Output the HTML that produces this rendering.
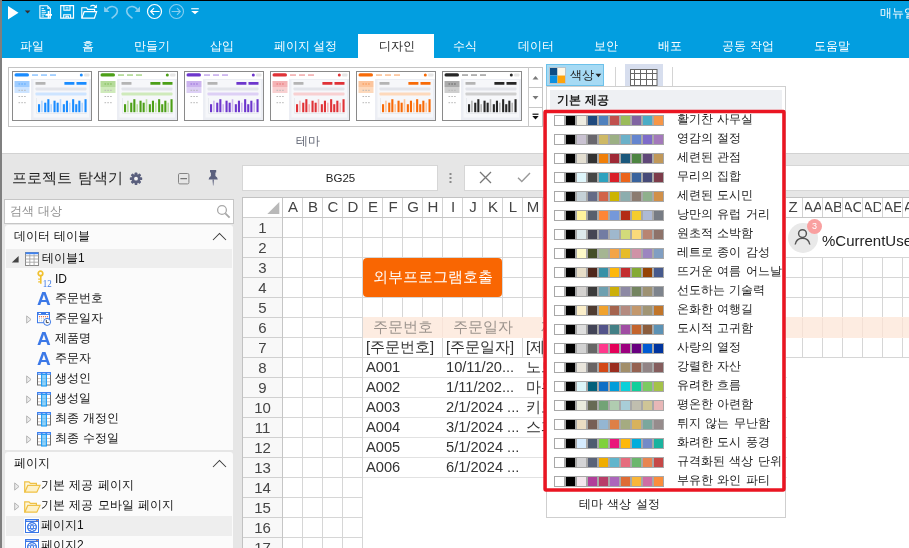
<!DOCTYPE html>
<html lang="ko"><head><meta charset="utf-8"><title>Designer</title>
<style>
*{box-sizing:border-box;margin:0;padding:0}
html,body{width:909px;height:548px;overflow:hidden;background:#e6e6e6}
body{position:relative;font-family:"Liberation Sans",sans-serif;font-size:12px;color:#222;line-height:1}
#app{position:absolute;left:0;top:0;width:909px;height:548px;overflow:hidden;will-change:transform}
.abs{position:absolute}
.t{position:absolute;white-space:nowrap;line-height:1}
#top{left:0;top:0;width:909px;height:58px;background:#029ee0}
#blk{left:0;top:0;width:909px;height:1px;background:#000}
#lb{left:0;top:0;width:2px;height:548px;background:#7f7f7f}
.tab{position:absolute;top:39px;font-size:12px;color:#fff;white-space:nowrap;transform:translateX(-50%);line-height:14px}
#acttab{left:358px;top:34px;width:76px;height:25px;background:#fff}
#ribbon{left:2px;top:58px;width:907px;height:96px;background:#fff;border-bottom:1px solid #d2d2d2}
#gal{left:8px;top:67px;width:535px;height:60px;border:1px solid #c4c4c4;background:#fff}
.th{position:absolute;top:71px;width:80px;height:50px}

#sheet{left:242px;top:197px;width:667px;height:351px;background:#fff;border-left:1px solid #c2c2c2;border-top:1px solid #c2c2c2;overflow:hidden}
.gl{position:absolute;background-image:linear-gradient(to right,#d6d6d6 1px,transparent 1px),linear-gradient(to bottom,#d6d6d6 1px,transparent 1px);background-size:20px 20px}
.ch{position:absolute;top:197px;width:20px;height:19px;clip-path:inset(0 2px);display:flex;justify-content:center;align-items:center;overflow:hidden;font-size:15px;color:#444;white-space:nowrap}
.rh{position:absolute;left:243px;width:39px;height:20px;text-align:center;font-size:15px;line-height:19px;color:#444}
.cell{position:absolute;font-size:14.67px;line-height:20px;height:20px;white-space:nowrap;overflow:hidden;color:#333}

.sw{position:absolute;left:554px;height:11px;display:flex}
.sw i{display:block;width:11px;height:11px;border:1px solid #a8a8a8}
.sl{position:absolute;left:677px;font-size:12px;line-height:14px;color:#222;white-space:nowrap;word-spacing:1px}
</style></head>
<body>
<div id="app">
<div class="abs" id="top"></div>
<div class="abs" id="ribbon"></div>
<div class="abs" id="acttab"></div>
<div class="tab" style="left:32.0px">파일</div>
<div class="tab" style="left:88.3px">홈</div>
<div class="tab" style="left:151.6px">만들기</div>
<div class="tab" style="left:221.8px">삽입</div>
<div class="tab" style="left:305.3px">페이지 설정</div>
<div class="tab" style="left:396.5px;color:#222">디자인</div>
<div class="tab" style="left:465.4px">수식</div>
<div class="tab" style="left:536.2px">데이터</div>
<div class="tab" style="left:605.8px">보안</div>
<div class="tab" style="left:670.0px">배포</div>
<div class="tab" style="left:748.0px">공동 작업</div>
<div class="tab" style="left:831.8px">도움말</div>
<div class="t" style="left:880px;top:7px;font-size:12px;color:#fff">매뉴얼</div>
<div class="abs" id="gal"></div>
<svg width="0" height="0" style="position:absolute"><defs><symbol id="thm" viewBox="0 0 80 50"><rect x="0.5" y="0.5" width="79" height="49" fill="#fff" stroke="#8a8a8a"/><rect x="19" y="8" width="60" height="41" fill="#eceef4"/><rect x="21.5" y="9" width="55.5" height="37.5" fill="#f6f7fa"/><rect x="2.5" y="2.3" width="14.5" height="3.2" rx="1.6" fill="var(--c1)"/><rect x="20" y="3.4" width="6" height="1.3" fill="var(--c2)"/><rect x="29" y="3.4" width="6" height="1.3" fill="var(--c2)"/><rect x="38" y="3.4" width="6" height="1.3" fill="var(--c2)"/><circle cx="69.3" cy="4" r="1.5" fill="var(--c1)"/><rect x="72" y="2.5" width="5.5" height="3" rx="1" fill="#e6e6e6"/><rect x="2.5" y="10" width="15" height="6" fill="var(--c2)" opacity=".75"/><rect x="2.5" y="16" width="15" height="6" fill="var(--c3)"/><g fill="var(--c1)" opacity=".55"><rect x="6.5" y="12.5" width="1.6" height="1"/><rect x="9.3" y="12.5" width="1.6" height="1"/><rect x="12.1" y="12.5" width="1.6" height="1"/></g><g fill="#b8b8b8"><rect x="6.5" y="18.8" width="1.6" height="1"/><rect x="9.3" y="18.8" width="1.6" height="1"/><rect x="12.1" y="18.8" width="1.6" height="1"/><rect x="6.5" y="25" width="1.6" height="1"/><rect x="9.3" y="25" width="1.6" height="1"/><rect x="12.1" y="25" width="1.6" height="1"/><rect x="6.5" y="31.2" width="1.6" height="1"/><rect x="9.3" y="31.2" width="1.6" height="1"/><rect x="12.1" y="31.2" width="1.6" height="1"/></g><rect x="23.5" y="11" width="10" height="2.8" rx=".6" fill="#b4b4b4"/><rect x="52.4" y="11" width="10" height="2.8" rx=".4" fill="var(--c1)"/><rect x="64.5" y="11" width="10" height="2.8" rx=".4" fill="var(--c1)"/><rect x="23.5" y="16.5" width="51" height="2.9" rx=".8" fill="#e2e4ea"/><rect x="23.5" y="21.5" width="51" height="3" rx=".8" fill="var(--c3)"/><rect x="24.3" y="27" width=".6" height="15" fill="#dfe2e8"/><rect x="24.3" y="42" width="50.5" height=".7" fill="#e4e6ea"/><rect x="26.0" y="33.2" width="2.1" height="8.0" fill="var(--c1)"/><rect x="29.1" y="29.7" width="1.6" height="11.5" fill="var(--c4)"/><rect x="32.2" y="31.7" width="2.1" height="9.5" fill="var(--c1)"/><rect x="35.3" y="28.2" width="2.1" height="13.0" fill="var(--c1)"/><rect x="38.4" y="33.2" width="1.6" height="8.0" fill="var(--c4)"/><rect x="41.5" y="29.7" width="2.1" height="11.5" fill="var(--c1)"/><rect x="44.6" y="31.7" width="2.1" height="9.5" fill="var(--c1)"/><rect x="47.7" y="28.2" width="1.6" height="13.0" fill="var(--c4)"/><rect x="50.8" y="33.2" width="2.1" height="8.0" fill="var(--c1)"/><rect x="53.9" y="29.7" width="2.1" height="11.5" fill="var(--c1)"/><rect x="57.0" y="31.7" width="1.6" height="9.5" fill="var(--c4)"/><rect x="60.1" y="28.2" width="2.1" height="13.0" fill="var(--c1)"/><rect x="63.2" y="33.2" width="2.1" height="8.0" fill="var(--c1)"/><rect x="66.3" y="29.7" width="2.1" height="11.5" fill="var(--c1)"/><rect x="69.4" y="31.7" width="1.6" height="9.5" fill="var(--c4)"/><rect x="72.5" y="28.2" width="2.1" height="13.0" fill="var(--c1)"/></symbol></defs></svg>
<svg class="th" style="left:12px;--c1:#1a8cff;--c2:#7dbbff;--c3:#cde4ff;--c4:#b3d6ff"><use href="#thm"/></svg>
<svg class="th" style="left:98px;--c1:#4c9f17;--c2:#9ccf78;--c3:#cfeabb;--c4:#b9dea0"><use href="#thm"/></svg>
<svg class="th" style="left:184px;--c1:#6d36cc;--c2:#b99ae8;--c3:#ddd0f5;--c4:#ccb6ee"><use href="#thm"/></svg>
<svg class="th" style="left:270px;--c1:#e03237;--c2:#f09a9c;--c3:#f8d0d1;--c4:#f4b5b7"><use href="#thm"/></svg>
<svg class="th" style="left:356px;--c1:#f86a06;--c2:#fbb27c;--c3:#fdd9bc;--c4:#fcc59c"><use href="#thm"/></svg>
<svg class="th" style="left:442px;--c1:#262626;--c2:#8f8f8f;--c3:#cfcfcf;--c4:#b5b5b5"><use href="#thm"/></svg>
<div class="abs" style="left:528px;top:67px;width:1px;height:60px;background:#c8c8c8"></div>
<div class="abs" style="left:529px;top:87px;width:13px;height:1px;background:#c8c8c8"></div>
<div class="abs" style="left:529px;top:107px;width:13px;height:1px;background:#c8c8c8"></div>
<svg class="abs" style="left:529px;top:68px" width="14" height="58" viewBox="0 0 14 58"><path d="M3.5 11.5 L6.5 8 L9.5 11.5Z" fill="#7a7a7a"/><path d="M3.5 28 L9.5 28 L6.5 31.5Z" fill="#7a7a7a"/><rect x="3.5" y="45.6" width="6" height="1.2" fill="#111"/><path d="M3.3 48 L9.7 48 L6.5 51.6Z" fill="#111"/></svg>
<div class="t" style="left:296px;top:134.5px;font-size:12px;color:#5f6472">테마</div>
<svg class="abs" style="left:0;top:0" width="210" height="26" viewBox="0 0 210 26" fill="none"><path d="M8 6 L8 19.5 L18.5 12.7Z" fill="#fff"/><path d="M24.8 10.6 L30.4 10.6 L27.6 13.6Z" fill="#3a2a2a"/><path d="M39.9 5.7 H47.4 L50.4 8.8 V18.1 H39.9Z" stroke="#fff" stroke-width="1.1" fill="none"/><path d="M47.2 5.6 V9 H50.5Z" fill="#c9e8f8"/><path d="M41.6 8.6H44M41.6 10.5H45.4M41.6 12.3H46.2M41.6 14.2H45M41.6 16.1H44" stroke="#fff" stroke-width=".9"/><path d="M45.4 14.9H52M48.6 11V18.2" stroke="#fff" stroke-width="1.8"/><path d="M60.7 5.7 H73.5 V18.1 H60.7Z" stroke="#fff" stroke-width="1.2"/><path d="M63.9 5.7V10.3H70V5.7" stroke="#fff" stroke-width="1.1"/><path d="M65.6 7.7H68.5M65.6 9.2H68.5" stroke="#fff" stroke-width=".8"/><path d="M63.7 18.1V14.7H70.6V18.1M66 18.1V16.3H68.3V18.1" stroke="#fff" stroke-width="1.1"/><path d="M81.8 18.1 V7.7 H86.6 L87.6 9.4 H94.6 V11.6" stroke="#fff" stroke-width="1.1"/><path d="M81.9 18.1 L84.2 11.7 H96.6 L94.4 18.1Z" stroke="#fff" stroke-width="1.2"/><path d="M90.3 6.4 C92 4.9 94.6 5 96 7.2" stroke="#fff" stroke-width="1.1"/><path d="M96.9 4.6 V8 H93.6Z" fill="#fff"/><path d="M104.1 6.4 V11.9 H109.4Z" fill="#86cef0"/><path d="M106.6 9.6 C109.4 5.6 114.6 5.6 116.8 8.8 C118.6 11.8 116.4 15 111.6 18.4" stroke="#86cef0" stroke-width="1.6"/><path d="M140 6.4 V11.9 H134.7Z" fill="#86cef0"/><path d="M137.5 9.6 C134.7 5.6 129.5 5.6 127.3 8.8 C125.5 11.8 127.7 15 132.5 18.4" stroke="#86cef0" stroke-width="1.6"/><circle cx="154.5" cy="11.5" r="7" stroke="#fff" stroke-width="1.2"/><path d="M150.8 11.5 H159.6 M154 8.2 L150.7 11.5 L154 14.8" stroke="#fff" stroke-width="1.2"/><circle cx="176.5" cy="11.5" r="7" stroke="#86cef0" stroke-width="1.1"/><path d="M171.6 11.5 H180.3 M177 8.2 L180.3 11.5 L177 14.8" stroke="#86cef0" stroke-width="1.1"/><rect x="191.2" y="8.2" width="7.6" height="1.1" fill="#fff"/><path d="M191.2 11 H198.8 L195 14.2Z" fill="#fff"/></svg>
<div class="abs" style="left:546px;top:64px;width:58px;height:22px;background:#a6daf4;border:1px solid #6cc1ea"></div>
<svg class="abs" style="left:549px;top:67px" width="17" height="17" viewBox="0 0 17 17"><rect x=".5" y=".5" width="16" height="16" fill="#fff" stroke="#b9c4cc"/><rect x="1" y="1" width="7.5" height="7.5" fill="#0f4d85"/><rect x="8.5" y="1" width="7.5" height="7.5" fill="#fff7e6"/><rect x="1" y="8.5" width="7.5" height="7.5" fill="#0a8fe0"/><rect x="8.5" y="8.5" width="7.5" height="7.5" fill="#ffa40b"/></svg>
<div class="t" style="left:570px;top:69px;font-size:12px;color:#222">색상</div>
<svg class="abs" style="left:595px;top:73px" width="7" height="5"><path d="M.5 .8 H6.3 L3.4 4.2Z" fill="#222"/></svg>
<div class="abs" style="left:615px;top:67px;width:1px;height:20px;background:#d4d4d4"></div>
<div class="abs" style="left:672px;top:67px;width:1px;height:20px;background:#d4d4d4"></div>
<div class="abs" style="left:625px;top:64px;width:38px;height:23px;background:#d7deee"></div>
<svg class="abs" style="left:630px;top:69px" width="28" height="18" viewBox="0 0 28 18" fill="none" stroke="#666" stroke-width="1"><rect x=".5" y=".5" width="26.5" height="18" fill="#fff"/><path d="M.5 4.5H27 M.5 10.5H27 M.5 16.5H27 M4.5 .5V18 M10.5 .5V18 M16.5 .5V18 M22.5 .5V18"/></svg>
<div class="t" style="left:12px;top:171px;font-size:14.5px;color:#222;word-spacing:2px">프로젝트 탐색기</div>
<svg class="abs" style="left:129px;top:172px" width="14" height="14" viewBox="0 0 14 14"><g fill="#5b607e"><circle cx="7" cy="6.7" r="4.5"/><g id="gt"><rect x="5.6" y="0.5" width="2.8" height="12.4" rx=".7"/></g><use href="#gt" transform="rotate(45 7 6.7)"/><use href="#gt" transform="rotate(90 7 6.7)"/><use href="#gt" transform="rotate(135 7 6.7)"/></g><circle cx="7" cy="6.7" r="1.9" fill="#f4f4f4"/></svg>
<svg class="abs" style="left:178px;top:173px" width="12" height="12" viewBox="0 0 12 12" fill="none" stroke="#858585" stroke-width="1"><rect x=".5" y=".5" width="10.4" height="10.4" rx="1.3"/><path d="M2.4 5.7H9" stroke="#5a5a5a"/></svg>
<svg class="abs" style="left:208px;top:170px" width="11" height="16" viewBox="0 0 11 16"><path d="M2 0 H8.2 V2.6 H7.4 V6 Q9.6 7.2 9.8 9.6 H.6 Q.8 7.2 2.9 6 V2.6 H2Z" fill="#5b607e"/><path d="M4.5 9.6 H5.9 L5.4 15.6 H5Z" fill="#5b607e"/></svg>
<div class="abs" style="left:4px;top:199px;width:230px;height:25px;background:#fff;border:1px solid #c6c6c6"></div>
<div class="t" style="left:10px;top:205px;font-size:12px;color:#8f8f8f;word-spacing:1px">검색 대상</div>
<svg class="abs" style="left:216px;top:204px" width="15" height="15" viewBox="0 0 15 15" fill="none" stroke="#a8a8a8" stroke-width="1.3"><circle cx="6" cy="6" r="4.4"/><path d="M9.3 9.3 L13.6 13.6" stroke-width="1.8"/></svg>
<div class="abs" style="left:5px;top:225px;width:228px;height:225px;background:#fbfbfb;border-radius:3px 3px 0 0"></div>
<div class="abs" style="left:5px;top:452px;width:228px;height:100px;background:#fbfbfb;border-radius:3px"></div>
<div class="abs" style="left:6px;top:249px;width:226px;height:19px;background:#eeeeee"></div>
<div class="abs" style="left:6px;top:516px;width:226px;height:20px;background:#eeeeee"></div>
<div class="t" style="left:14px;top:230px;font-size:12px;color:#111;word-spacing:1px">데이터 테이블</div>
<svg class="abs" style="left:212px;top:232px" width="15" height="9" viewBox="0 0 15 9" fill="none" stroke="#3c3c3c" stroke-width="1.05"><path d="M1 8 L7.5 1.5 L14 8"/></svg>
<div class="t" style="left:14px;top:457px;font-size:12px;color:#111">페이지</div>
<svg class="abs" style="left:212px;top:459px" width="15" height="9" viewBox="0 0 15 9" fill="none" stroke="#3c3c3c" stroke-width="1.05"><path d="M1 8 L7.5 1.5 L14 8"/></svg>
<svg class="abs" style="left:11px;top:255px" width="8" height="8"><path d="M7.6 1 V7.4 H.8Z" fill="#444"/></svg>
<svg class="abs" style="left:25px;top:252px" width="14" height="14" viewBox="0 0 14 14" fill="none"><rect x=".5" y=".5" width="13" height="13" fill="#fff" stroke="#8a8a8a"/><rect x=".5" y=".3" width="13" height="1.9" fill="#3f83f2"/><path d="M.5 3.8H13.5M.5 7H13.5M.5 10.2H13.5M4.8 2.2V13.5M9.1 2.2V13.5" stroke="#a6a6a6" stroke-width=".9"/></svg>
<div class="t" style="left:42px;top:252px;font-size:12px;color:#111">테이블1</div>
<svg class="abs" style="left:37px;top:269px" width="16" height="19" viewBox="0 0 16 19" fill="none"><circle cx="3.5" cy="4.4" r="2.3" stroke="#f1c12f" stroke-width="1.7"/><path d="M3.8 6.8V14.8" stroke="#f1c12f" stroke-width="1.6"/><path d="M1.2 10.2H3.8M1.2 12.8H3.8" stroke="#f1c12f" stroke-width="1.3"/><text x="5.8" y="18.4" font-family="Liberation Serif, serif" font-size="9.5" fill="#3b78e7" stroke="none" textLength="9" lengthAdjust="spacingAndGlyphs">12</text></svg>
<div class="t" style="left:55px;top:273px;font-size:12px;color:#111">ID</div>
<div class="t" style="left:37px;top:289px;font-size:19px;font-weight:bold;color:#3b78e7">A</div>
<div class="t" style="left:55px;top:292px;font-size:12px;color:#111">주문번호</div>
<svg class="abs" style="left:26px;top:315px" width="6" height="9" viewBox="0 0 6 9" fill="#ececec" stroke="#b4b4b4" stroke-width="1"><path d="M.7 .9 L5 4.5 L.7 8.1Z"/></svg>
<svg class="abs" style="left:37px;top:312px" width="15" height="15" viewBox="0 0 15 15" fill="none"><rect x=".5" y=".5" width="12" height="10.2" fill="#fff" stroke="#3b78e7" stroke-width="1"/><rect x="0" y="0" width="13" height="2.9" fill="#3b78e7"/><rect x="1.7" y="1" width="2.3" height="1" fill="#fff"/><rect x="9" y="1" width="2.3" height="1" fill="#fff"/><g fill="#e8663d"><circle cx="2.5" cy="4.7" r=".62"/><circle cx="4.5" cy="4.7" r=".62"/><circle cx="6.5" cy="4.7" r=".62"/><circle cx="8.5" cy="4.7" r=".62"/><circle cx="10.5" cy="4.7" r=".62"/></g><g fill="#bdbdbd"><circle cx="2.5" cy="6.8" r=".55"/><circle cx="4.5" cy="6.8" r=".55"/><circle cx="6.5" cy="6.8" r=".55"/><circle cx="2.5" cy="8.8" r=".55"/><circle cx="4.5" cy="8.8" r=".55"/></g><circle cx="10.1" cy="9.9" r="3.5" fill="#fff" stroke="#3b78e7" stroke-width="1"/><path d="M9.3 7.9V10.6H11.7" stroke="#444" stroke-width="1"/></svg>
<div class="t" style="left:55px;top:312px;font-size:12px;color:#111">주문일자</div>
<div class="t" style="left:37px;top:329px;font-size:19px;font-weight:bold;color:#3b78e7">A</div>
<div class="t" style="left:55px;top:332px;font-size:12px;color:#111">제품명</div>
<div class="t" style="left:37px;top:349px;font-size:19px;font-weight:bold;color:#3b78e7">A</div>
<div class="t" style="left:55px;top:352px;font-size:12px;color:#111">주문자</div>
<svg class="abs" style="left:26px;top:375px" width="6" height="9" viewBox="0 0 6 9" fill="#ececec" stroke="#b4b4b4" stroke-width="1"><path d="M.7 .9 L5 4.5 L.7 8.1Z"/></svg>
<svg class="abs" style="left:37px;top:372px" width="14" height="15" viewBox="0 0 14 15" fill="none"><rect x=".5" y=".5" width="13" height="12.5" fill="#fff" stroke="#6e6e6e"/><path d="M1 6.5H13M1 9.8H13" stroke="#cdbfb8" stroke-width=".9"/><rect x="0" y="0" width="14" height="2.8" fill="#3f83f2"/><path d="M1.2 1.5H3.8M5.6 1.5H8.4M10.2 1.5H12.8" stroke="#cfe0fb" stroke-width=".8"/><rect x="4.6" y="2.4" width="4.8" height="11.6" fill="#93d2f8" stroke="#1f9cf3" stroke-width="1.1"/><path d="M5.2 6.5H8.8M5.2 9.8H8.8" stroke="#6fbdee" stroke-width=".8"/></svg>
<div class="t" style="left:55px;top:372px;font-size:12px;color:#111">생성인</div>
<svg class="abs" style="left:26px;top:395px" width="6" height="9" viewBox="0 0 6 9" fill="#ececec" stroke="#b4b4b4" stroke-width="1"><path d="M.7 .9 L5 4.5 L.7 8.1Z"/></svg>
<svg class="abs" style="left:37px;top:392px" width="14" height="15" viewBox="0 0 14 15" fill="none"><rect x=".5" y=".5" width="13" height="12.5" fill="#fff" stroke="#6e6e6e"/><path d="M1 6.5H13M1 9.8H13" stroke="#cdbfb8" stroke-width=".9"/><rect x="0" y="0" width="14" height="2.8" fill="#3f83f2"/><path d="M1.2 1.5H3.8M5.6 1.5H8.4M10.2 1.5H12.8" stroke="#cfe0fb" stroke-width=".8"/><rect x="4.6" y="2.4" width="4.8" height="11.6" fill="#93d2f8" stroke="#1f9cf3" stroke-width="1.1"/><path d="M5.2 6.5H8.8M5.2 9.8H8.8" stroke="#6fbdee" stroke-width=".8"/></svg>
<div class="t" style="left:55px;top:392px;font-size:12px;color:#111">생성일</div>
<svg class="abs" style="left:26px;top:415px" width="6" height="9" viewBox="0 0 6 9" fill="#ececec" stroke="#b4b4b4" stroke-width="1"><path d="M.7 .9 L5 4.5 L.7 8.1Z"/></svg>
<svg class="abs" style="left:37px;top:412px" width="14" height="15" viewBox="0 0 14 15" fill="none"><rect x=".5" y=".5" width="13" height="12.5" fill="#fff" stroke="#6e6e6e"/><path d="M1 6.5H13M1 9.8H13" stroke="#cdbfb8" stroke-width=".9"/><rect x="0" y="0" width="14" height="2.8" fill="#3f83f2"/><path d="M1.2 1.5H3.8M5.6 1.5H8.4M10.2 1.5H12.8" stroke="#cfe0fb" stroke-width=".8"/><rect x="4.6" y="2.4" width="4.8" height="11.6" fill="#93d2f8" stroke="#1f9cf3" stroke-width="1.1"/><path d="M5.2 6.5H8.8M5.2 9.8H8.8" stroke="#6fbdee" stroke-width=".8"/></svg>
<div class="t" style="left:55px;top:412px;font-size:12px;color:#111;word-spacing:1px">최종 개정인</div>
<svg class="abs" style="left:26px;top:435px" width="6" height="9" viewBox="0 0 6 9" fill="#ececec" stroke="#b4b4b4" stroke-width="1"><path d="M.7 .9 L5 4.5 L.7 8.1Z"/></svg>
<svg class="abs" style="left:37px;top:432px" width="14" height="15" viewBox="0 0 14 15" fill="none"><rect x=".5" y=".5" width="13" height="12.5" fill="#fff" stroke="#6e6e6e"/><path d="M1 6.5H13M1 9.8H13" stroke="#cdbfb8" stroke-width=".9"/><rect x="0" y="0" width="14" height="2.8" fill="#3f83f2"/><path d="M1.2 1.5H3.8M5.6 1.5H8.4M10.2 1.5H12.8" stroke="#cfe0fb" stroke-width=".8"/><rect x="4.6" y="2.4" width="4.8" height="11.6" fill="#93d2f8" stroke="#1f9cf3" stroke-width="1.1"/><path d="M5.2 6.5H8.8M5.2 9.8H8.8" stroke="#6fbdee" stroke-width=".8"/></svg>
<div class="t" style="left:55px;top:432px;font-size:12px;color:#111;word-spacing:1px">최종 수정일</div>
<svg class="abs" style="left:14px;top:482px" width="6" height="9" viewBox="0 0 6 9" fill="#ececec" stroke="#b4b4b4" stroke-width="1"><path d="M.7 .9 L5 4.5 L.7 8.1Z"/></svg>
<svg class="abs" style="left:24px;top:481px" width="17" height="12" viewBox="0 0 17 12" fill="none"><path d="M.7 11.2 V.8 H5 L6.4 2.4 H12.4 V4.4" stroke="#efc145" stroke-width="1.2" fill="#fdf6dc"/><path d="M.8 11.2 L3.8 4.4 H16 L12.8 11.2Z" stroke="#efc145" stroke-width="1.2" fill="#fdf1c8"/></svg>
<div class="t" style="left:41px;top:479px;font-size:12px;color:#111;word-spacing:1px">기본 제공 페이지</div>
<svg class="abs" style="left:14px;top:502px" width="6" height="9" viewBox="0 0 6 9" fill="#ececec" stroke="#b4b4b4" stroke-width="1"><path d="M.7 .9 L5 4.5 L.7 8.1Z"/></svg>
<svg class="abs" style="left:24px;top:501px" width="17" height="12" viewBox="0 0 17 12" fill="none"><path d="M.7 11.2 V.8 H5 L6.4 2.4 H12.4 V4.4" stroke="#efc145" stroke-width="1.2" fill="#fdf6dc"/><path d="M.8 11.2 L3.8 4.4 H16 L12.8 11.2Z" stroke="#efc145" stroke-width="1.2" fill="#fdf1c8"/></svg>
<div class="t" style="left:41px;top:499px;font-size:12px;color:#111;word-spacing:1px">기본 제공 모바일 페이지</div>
<svg class="abs" style="left:24px;top:518px" width="16" height="16" viewBox="-1 -1 16 16" fill="none"><rect x="-1" y="-1" width="16" height="16" rx="1.2" fill="#fff"/><rect x=".5" y=".5" width="13" height="13" fill="#fff" stroke="#3b78e7" stroke-width="1"/><rect x="0" y="0" width="14" height="3" fill="#3b78e7"/><rect x="1.4" y="1.1" width="9.6" height=".8" fill="#dfe9fb"/><circle cx="12.3" cy="1.5" r=".7" fill="#f0883a"/><circle cx="7" cy="8.1" r="4.4" fill="#fff" stroke="#3b78e7" stroke-width="1.2"/><rect x="2.7" y="6.3" width="8.6" height="3.6" fill="#3b78e7"/><rect x="3.4" y="7.1" width="1.7" height="2" fill="#fff"/><rect x="6.1" y="7.1" width="1.8" height="2" fill="#fff"/><rect x="8.9" y="7.1" width="1.7" height="2" fill="#fff"/><path d="M5.2 4.4 C5.4 5.4 6 5.9 7 5.9 C8 5.9 8.6 5.4 8.8 4.4 M5.2 11.8 C5.4 10.8 6 10.3 7 10.3 C8 10.3 8.6 10.8 8.8 11.8" stroke="#3b78e7" stroke-width="1"/></svg>
<div class="t" style="left:41px;top:519px;font-size:12px;color:#111">페이지1</div>
<svg class="abs" style="left:24px;top:538px" width="16" height="16" viewBox="-1 -1 16 16" fill="none"><rect x="-1" y="-1" width="16" height="16" rx="1.2" fill="#fff"/><rect x=".5" y=".5" width="13" height="13" fill="#fff" stroke="#3b78e7" stroke-width="1"/><rect x="0" y="0" width="14" height="3" fill="#3b78e7"/><rect x="1.4" y="1.1" width="9.6" height=".8" fill="#dfe9fb"/><circle cx="12.3" cy="1.5" r=".7" fill="#f0883a"/><circle cx="7" cy="8.1" r="4.4" fill="#fff" stroke="#3b78e7" stroke-width="1.2"/><rect x="2.7" y="6.3" width="8.6" height="3.6" fill="#3b78e7"/><rect x="3.4" y="7.1" width="1.7" height="2" fill="#fff"/><rect x="6.1" y="7.1" width="1.8" height="2" fill="#fff"/><rect x="8.9" y="7.1" width="1.7" height="2" fill="#fff"/><path d="M5.2 4.4 C5.4 5.4 6 5.9 7 5.9 C8 5.9 8.6 5.4 8.8 4.4 M5.2 11.8 C5.4 10.8 6 10.3 7 10.3 C8 10.3 8.6 10.8 8.8 11.8" stroke="#3b78e7" stroke-width="1"/></svg>
<div class="t" style="left:41px;top:539px;font-size:12px;color:#111">페이지2</div>
<div class="abs" style="left:242px;top:165px;width:196px;height:26px;background:#fff;border:1px solid #d6d6d6"></div>
<div class="t" style="left:340.5px;top:173px;font-size:11.5px;color:#222;transform:translateX(-50%)">BG25</div>
<svg class="abs" style="left:449px;top:172px" width="3" height="12"><rect x=".5" y="1" width="2" height="2" fill="#8a8a8a"/><rect x=".5" y="5" width="2" height="2" fill="#8a8a8a"/><rect x=".5" y="9" width="2" height="2" fill="#8a8a8a"/></svg>
<div class="abs" style="left:464px;top:165px;width:445px;height:26px;background:#fff;border:1px solid #d6d6d6;border-right:0"></div>
<svg class="abs" style="left:479px;top:171px" width="13" height="13" viewBox="0 0 13 13" fill="none" stroke="#777" stroke-width="1.3"><path d="M1 1 L12 12 M12 1 L1 12"/></svg>
<svg class="abs" style="left:517px;top:172px" width="14" height="11" viewBox="0 0 14 11" fill="none" stroke="#999" stroke-width="1.4"><path d="M1 5.8 L4.8 9.6 L13 1"/></svg>
<div class="abs" id="sheet"></div>
<div class="abs" style="left:243px;top:218px;width:39px;height:330px;background:#f8f8f8"></div>
<div class="gl" style="left:282px;top:217px;width:627px;height:331px"></div>
<div class="abs" style="left:282px;top:198px;width:627px;height:19px;background-image:linear-gradient(to right,#d2d2d2 1px,transparent 1px);background-size:20px 20px"></div>
<div class="abs" style="left:243px;top:217px;width:666px;height:1px;background:#c6c6c6"></div>
<div class="abs" style="left:282px;top:198px;width:1px;height:350px;background:#c6c6c6"></div>
<div class="abs" style="left:243px;top:217px;width:39px;height:331px;background-image:linear-gradient(to bottom,#d0d0d0 1px,transparent 1px);background-size:20px 20px"></div>
<svg class="abs" style="left:267px;top:202px" width="13" height="13"><path d="M12.3 0 V12 H.3Z" fill="#b9b9b9"/></svg>
<div class="ch" style="left:283px">A</div>
<div class="ch" style="left:303px">B</div>
<div class="ch" style="left:323px">C</div>
<div class="ch" style="left:343px">D</div>
<div class="ch" style="left:363px">E</div>
<div class="ch" style="left:383px">F</div>
<div class="ch" style="left:403px">G</div>
<div class="ch" style="left:423px">H</div>
<div class="ch" style="left:443px">I</div>
<div class="ch" style="left:463px">J</div>
<div class="ch" style="left:483px">K</div>
<div class="ch" style="left:503px">L</div>
<div class="ch" style="left:523px">M</div>
<div class="ch" style="left:543px">N</div>
<div class="ch" style="left:563px">O</div>
<div class="ch" style="left:583px">P</div>
<div class="ch" style="left:603px">Q</div>
<div class="ch" style="left:623px">R</div>
<div class="ch" style="left:643px">S</div>
<div class="ch" style="left:663px">T</div>
<div class="ch" style="left:683px">U</div>
<div class="ch" style="left:703px">V</div>
<div class="ch" style="left:723px">W</div>
<div class="ch" style="left:743px">X</div>
<div class="ch" style="left:763px">Y</div>
<div class="ch" style="left:783px">Z</div>
<div class="ch" style="left:803px">AA</div>
<div class="ch" style="left:823px">AB</div>
<div class="ch" style="left:843px">AC</div>
<div class="ch" style="left:863px">AD</div>
<div class="ch" style="left:883px">AE</div>
<div class="ch" style="left:903px">AF</div>
<div class="rh" style="top:218px">1</div>
<div class="rh" style="top:238px">2</div>
<div class="rh" style="top:258px">3</div>
<div class="rh" style="top:278px">4</div>
<div class="rh" style="top:298px">5</div>
<div class="rh" style="top:318px">6</div>
<div class="rh" style="top:338px">7</div>
<div class="rh" style="top:358px">8</div>
<div class="rh" style="top:378px">9</div>
<div class="rh" style="top:398px">10</div>
<div class="rh" style="top:418px">11</div>
<div class="rh" style="top:438px">12</div>
<div class="rh" style="top:458px">13</div>
<div class="rh" style="top:478px">14</div>
<div class="rh" style="top:498px">15</div>
<div class="rh" style="top:518px">16</div>
<div class="rh" style="top:538px">17</div>
<div class="abs" style="left:783px;top:218px;width:126px;height:39px;background:#fff"></div>
<div class="abs" style="left:787.5px;top:222.5px;width:30px;height:30px;border-radius:50%;background:#e9e9e9"></div>
<svg class="abs" style="left:794px;top:228px" width="17" height="18" viewBox="0 0 17 18" fill="none" stroke="#555" stroke-width="1.45"><circle cx="8.5" cy="5.6" r="3.9"/><path d="M1.2 16.5 C2 11.6 5 10.2 8.5 10.2 C12 10.2 15 11.6 15.8 16.5"/></svg>
<div class="abs" style="left:807px;top:218.5px;width:15px;height:15px;border-radius:50%;background:#f9a0a0;color:#fff;font-size:9px;line-height:15px;text-align:center">3</div>
<div class="t" style="left:822px;top:233px;font-size:15px;color:#222">%CurrentUser%</div>
<div class="abs" style="left:363px;top:317px;width:546px;height:21px;background:#fdece1"></div>
<div class="abs" style="left:363px;top:338px;width:160px;height:19px;background:#fff"></div>
<div class="abs" style="left:363px;top:358px;width:546px;height:190px;background:#fff"></div>
<div class="abs" style="left:363px;top:377px;width:424px;height:1px;background:#e2e2e2"></div>
<div class="abs" style="left:363px;top:397px;width:424px;height:1px;background:#e2e2e2"></div>
<div class="abs" style="left:363px;top:417px;width:424px;height:1px;background:#e2e2e2"></div>
<div class="abs" style="left:363px;top:437px;width:424px;height:1px;background:#e2e2e2"></div>
<div class="abs" style="left:363px;top:457px;width:424px;height:1px;background:#e2e2e2"></div>
<div class="abs" style="left:363px;top:477px;width:424px;height:1px;background:#e2e2e2"></div>
<div class="abs" style="left:782px;top:318px;width:127px;height:19px;background-image:linear-gradient(to right,#f3e0d5 1px,transparent 1px);background-size:20px 20px"></div>
<div class="abs" style="left:442px;top:318px;width:1px;height:19px;background:#f7e3d8"></div>
<div class="cell" style="left:363px;top:317px;width:80px;text-align:center;color:#9c948e">주문번호</div>
<div class="cell" style="left:443px;top:317px;width:80px;text-align:center;color:#9c948e">주문일자</div>
<div class="cell" style="left:523px;top:317px;width:80px;text-align:center;color:#9c948e">제품명</div>
<div class="abs" style="left:442px;top:338px;width:1px;height:19px;background:#d6d6d6"></div>
<div class="abs" style="left:522px;top:338px;width:1px;height:19px;background:#d6d6d6"></div>
<div class="cell" style="left:366px;top:337px;width:76px">[주문번호]</div>
<div class="cell" style="left:446px;top:337px;width:76px">[주문일자]</div>
<div class="cell" style="left:526px;top:337px;width:76px">[제품명]</div>
<div class="cell" style="left:366px;top:357px;width:77px">A001</div>
<div class="cell" style="left:446px;top:357px;width:77px">10/11/20...</div>
<div class="cell" style="left:526px;top:357px;width:77px">노트북</div>
<div class="cell" style="left:366px;top:377px;width:77px">A002</div>
<div class="cell" style="left:446px;top:377px;width:77px">1/11/202...</div>
<div class="cell" style="left:526px;top:377px;width:77px">마우스</div>
<div class="cell" style="left:366px;top:397px;width:77px">A003</div>
<div class="cell" style="left:446px;top:397px;width:77px">2/1/2024 ...</div>
<div class="cell" style="left:526px;top:397px;width:77px">키보드</div>
<div class="cell" style="left:366px;top:417px;width:77px">A004</div>
<div class="cell" style="left:446px;top:417px;width:77px">3/1/2024 ...</div>
<div class="cell" style="left:526px;top:417px;width:77px">스피커</div>
<div class="cell" style="left:366px;top:437px;width:77px">A005</div>
<div class="cell" style="left:446px;top:437px;width:77px">5/1/2024 ...</div>
<div class="cell" style="left:366px;top:457px;width:77px">A006</div>
<div class="cell" style="left:446px;top:457px;width:77px">6/1/2024 ...</div>
<div class="abs" style="left:363px;top:258px;width:139px;height:39px;background:#f96602;border-radius:4px;color:#fff;font-size:15px;line-height:38px;text-align:center;white-space:nowrap">외부프로그램호출</div>
<div class="abs" style="left:546px;top:86px;width:240px;height:432px;background:#fff;border:1px solid #cfcfcf"></div>
<div class="abs" style="left:550px;top:90px;width:232px;height:20px;background:#eef0f3"></div>
<div class="t" style="left:557px;top:94px;font-size:12px;font-weight:bold;color:#222;word-spacing:1px">기본 제공</div>
<div class="sw" style="top:115px"><i style="background:#FFFFFF"></i><i style="background:#000000"></i><i style="background:#EEECE1"></i><i style="background:#1F497D"></i><i style="background:#4F81BD"></i><i style="background:#C0504D"></i><i style="background:#9BBB59"></i><i style="background:#8064A2"></i><i style="background:#4BACC6"></i><i style="background:#F79646"></i></div>
<div class="sl" style="top:112px">활기찬 사무실</div>
<div class="sw" style="top:134px"><i style="background:#FFFFFF"></i><i style="background:#000000"></i><i style="background:#C9C2D1"></i><i style="background:#69676D"></i><i style="background:#CEB966"></i><i style="background:#9CB084"></i><i style="background:#6BB1C9"></i><i style="background:#6585CF"></i><i style="background:#7E6BC9"></i><i style="background:#A379BB"></i></div>
<div class="sl" style="top:131px">영감의 절정</div>
<div class="sw" style="top:153px"><i style="background:#FFFFFF"></i><i style="background:#000000"></i><i style="background:#E3DED1"></i><i style="background:#323232"></i><i style="background:#F07F09"></i><i style="background:#9F2936"></i><i style="background:#1B587C"></i><i style="background:#4E8542"></i><i style="background:#604878"></i><i style="background:#C19859"></i></div>
<div class="sl" style="top:150px">세련된 관점</div>
<div class="sw" style="top:172px"><i style="background:#FFFFFF"></i><i style="background:#000000"></i><i style="background:#DEF5FA"></i><i style="background:#464646"></i><i style="background:#2DA2BF"></i><i style="background:#DA1F28"></i><i style="background:#EB641B"></i><i style="background:#39639D"></i><i style="background:#474B78"></i><i style="background:#7D3C4A"></i></div>
<div class="sl" style="top:169px">무리의 집합</div>
<div class="sw" style="top:191px"><i style="background:#FFFFFF"></i><i style="background:#000000"></i><i style="background:#C5D1D7"></i><i style="background:#646B86"></i><i style="background:#D16349"></i><i style="background:#CCB400"></i><i style="background:#8CADAE"></i><i style="background:#8C7B70"></i><i style="background:#8FB08C"></i><i style="background:#D19049"></i></div>
<div class="sl" style="top:188px">세련된 도시민</div>
<div class="sw" style="top:210px"><i style="background:#FFFFFF"></i><i style="background:#000000"></i><i style="background:#FFF39D"></i><i style="background:#575F6D"></i><i style="background:#FE8637"></i><i style="background:#7598D9"></i><i style="background:#B32C16"></i><i style="background:#F5CD2D"></i><i style="background:#AEBAD5"></i><i style="background:#777C84"></i></div>
<div class="sl" style="top:207px">낭만의 유럽 거리</div>
<div class="sw" style="top:229px"><i style="background:#FFFFFF"></i><i style="background:#000000"></i><i style="background:#DDE9EC"></i><i style="background:#464653"></i><i style="background:#727CA3"></i><i style="background:#9FB8CD"></i><i style="background:#D2DA7A"></i><i style="background:#FADA7A"></i><i style="background:#B88472"></i><i style="background:#8E736A"></i></div>
<div class="sl" style="top:226px">원초적 소박함</div>
<div class="sw" style="top:248px"><i style="background:#FFFFFF"></i><i style="background:#000000"></i><i style="background:#FEFAC9"></i><i style="background:#444D26"></i><i style="background:#A5B592"></i><i style="background:#F3A447"></i><i style="background:#E7BC29"></i><i style="background:#D092A7"></i><i style="background:#9C85C0"></i><i style="background:#809EC2"></i></div>
<div class="sl" style="top:245px">레트로 종이 감성</div>
<div class="sw" style="top:267px"><i style="background:#FFFFFF"></i><i style="background:#000000"></i><i style="background:#E7DEC9"></i><i style="background:#4F271C"></i><i style="background:#3891A7"></i><i style="background:#FEB80A"></i><i style="background:#C32D2E"></i><i style="background:#84AA33"></i><i style="background:#964305"></i><i style="background:#475A8D"></i></div>
<div class="sl" style="top:264px">뜨거운 여름 어느날</div>
<div class="sw" style="top:286px"><i style="background:#FFFFFF"></i><i style="background:#000000"></i><i style="background:#D4D2D0"></i><i style="background:#3B3B3B"></i><i style="background:#6EA0B0"></i><i style="background:#CCAF0A"></i><i style="background:#8D89A4"></i><i style="background:#748560"></i><i style="background:#9E9273"></i><i style="background:#7E848D"></i></div>
<div class="sl" style="top:283px">선도하는 기술력</div>
<div class="sw" style="top:305px"><i style="background:#FFFFFF"></i><i style="background:#000000"></i><i style="background:#FBEEC9"></i><i style="background:#4E3B30"></i><i style="background:#F0A22E"></i><i style="background:#A5644E"></i><i style="background:#B58B80"></i><i style="background:#C3986D"></i><i style="background:#A19574"></i><i style="background:#C17529"></i></div>
<div class="sl" style="top:302px">온화한 여행길</div>
<div class="sw" style="top:324px"><i style="background:#FFFFFF"></i><i style="background:#000000"></i><i style="background:#DEDEDE"></i><i style="background:#424456"></i><i style="background:#53548A"></i><i style="background:#438086"></i><i style="background:#A04DA3"></i><i style="background:#C4652D"></i><i style="background:#8B5D3D"></i><i style="background:#5C92B5"></i></div>
<div class="sl" style="top:321px">도시적 고귀함</div>
<div class="sw" style="top:343px"><i style="background:#FFFFFF"></i><i style="background:#000000"></i><i style="background:#D2D2D2"></i><i style="background:#666666"></i><i style="background:#FF388C"></i><i style="background:#E40059"></i><i style="background:#9C007F"></i><i style="background:#68007F"></i><i style="background:#005BD3"></i><i style="background:#00349E"></i></div>
<div class="sl" style="top:340px">사랑의 열정</div>
<div class="sw" style="top:362px"><i style="background:#FFFFFF"></i><i style="background:#000000"></i><i style="background:#E9E5DC"></i><i style="background:#696464"></i><i style="background:#D34817"></i><i style="background:#9B2D1F"></i><i style="background:#A28E6A"></i><i style="background:#956251"></i><i style="background:#918485"></i><i style="background:#855D5D"></i></div>
<div class="sl" style="top:359px">강렬한 자산</div>
<div class="sw" style="top:381px"><i style="background:#FFFFFF"></i><i style="background:#000000"></i><i style="background:#DBF5F9"></i><i style="background:#04617B"></i><i style="background:#0F6FC6"></i><i style="background:#009DD9"></i><i style="background:#0BD0D9"></i><i style="background:#10CF9B"></i><i style="background:#7CCA62"></i><i style="background:#A5C249"></i></div>
<div class="sl" style="top:378px">유려한 흐름</div>
<div class="sw" style="top:400px"><i style="background:#FFFFFF"></i><i style="background:#000000"></i><i style="background:#EAEBDE"></i><i style="background:#676A55"></i><i style="background:#72A376"></i><i style="background:#B0CCB0"></i><i style="background:#A8CDD7"></i><i style="background:#C0BEAF"></i><i style="background:#CEC597"></i><i style="background:#E8B7B7"></i></div>
<div class="sl" style="top:397px">평온한 아련함</div>
<div class="sw" style="top:419px"><i style="background:#FFFFFF"></i><i style="background:#000000"></i><i style="background:#EBDDC3"></i><i style="background:#775F55"></i><i style="background:#94B6D2"></i><i style="background:#DD8047"></i><i style="background:#A5AB81"></i><i style="background:#D8B25C"></i><i style="background:#7BA79D"></i><i style="background:#968C8C"></i></div>
<div class="sl" style="top:416px">튀지 않는 무난함</div>
<div class="sw" style="top:438px"><i style="background:#FFFFFF"></i><i style="background:#000000"></i><i style="background:#D6ECFF"></i><i style="background:#4E5B6F"></i><i style="background:#7FD13B"></i><i style="background:#EA157A"></i><i style="background:#FEB80A"></i><i style="background:#00ADDC"></i><i style="background:#738AC8"></i><i style="background:#1AB39F"></i></div>
<div class="sl" style="top:435px">화려한 도시 풍경</div>
<div class="sw" style="top:457px"><i style="background:#FFFFFF"></i><i style="background:#000000"></i><i style="background:#D4D4D6"></i><i style="background:#5A6378"></i><i style="background:#F0AD00"></i><i style="background:#60B5CC"></i><i style="background:#E66C7D"></i><i style="background:#6BB76D"></i><i style="background:#E88651"></i><i style="background:#C64847"></i></div>
<div class="sl" style="top:454px">규격화된 색상 단위</div>
<div class="sw" style="top:476px"><i style="background:#FFFFFF"></i><i style="background:#000000"></i><i style="background:#F4E7ED"></i><i style="background:#B13F9A"></i><i style="background:#B83D68"></i><i style="background:#AC66BB"></i><i style="background:#DE6C36"></i><i style="background:#F9B639"></i><i style="background:#CF6DA4"></i><i style="background:#FA8D3D"></i></div>
<div class="sl" style="top:473px">부유한 와인 파티</div>
<svg class="abs" style="left:540px;top:106px" width="250" height="390" viewBox="540 106 250 390" fill="none"><rect x="545.05" y="111.45" width="238.9" height="378.5" rx=".6" stroke="#ea1522" stroke-width="3.5"/></svg>
<div class="t" style="left:579px;top:498px;font-size:12px;color:#222;word-spacing:1px">테마 색상 설정</div>
<div class="abs" id="blk"></div>
<div class="abs" id="lb"></div>
</div>
</body></html>
